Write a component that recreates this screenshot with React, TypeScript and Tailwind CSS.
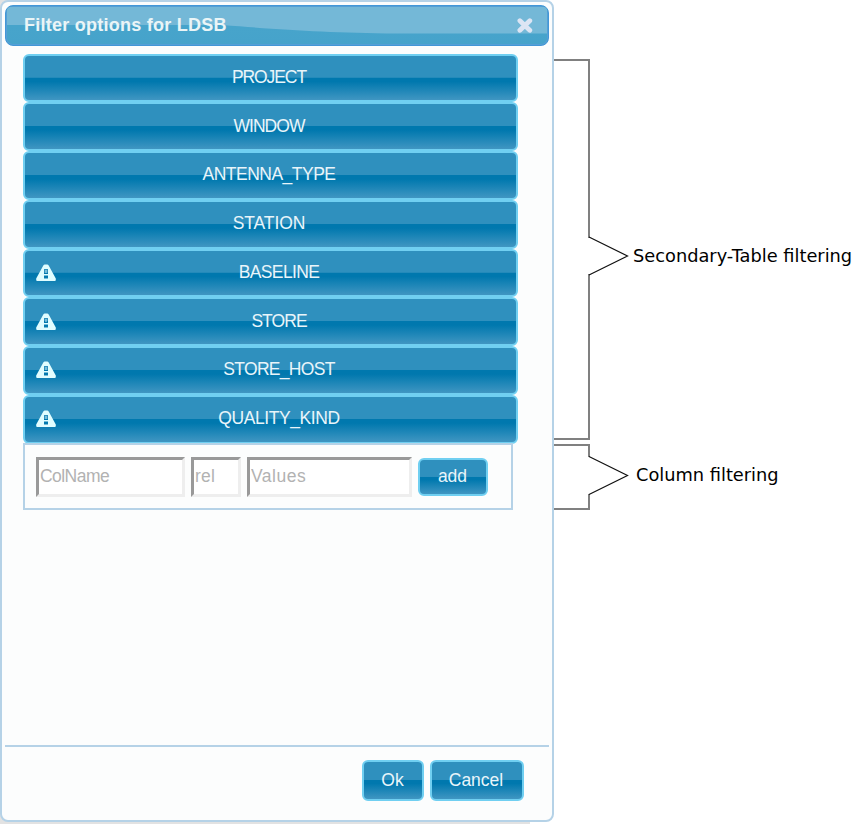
import React from 'react';

const glossy =
  'border-2 border-[#70cff1] bg-[linear-gradient(to_bottom,#2f90be_0%,#2f90be_48.5%,#0078ae_50%,#0078ae_58%,#4096c2_100%)] text-[#e9f5fa] font-["Liberation_Sans",Arial,sans-serif] text-[17.5px]';

const rows = [
  { label: 'PROJECT', warn: false, cls: 'tracking-[-1.1px]' },
  { label: 'WINDOW', warn: false, cls: 'tracking-[-0.95px]' },
  { label: 'ANTENNA_TYPE', warn: false, cls: 'tracking-[-0.5px]' },
  { label: 'STATION', warn: false, cls: 'tracking-[-0.1px]' },
  { label: 'BASELINE', warn: true, cls: 'tracking-[-0.65px]' },
  { label: 'STORE', warn: true, cls: 'tracking-[-0.95px]' },
  { label: 'STORE_HOST', warn: true, cls: 'tracking-[-0.7px]' },
  { label: 'QUALITY_KIND', warn: true, cls: 'tracking-[-0.4px]' },
];

function WarningIcon() {
  return (
    <svg width="20" height="18" viewBox="0 0 20 18" className="ml-[11px] shrink-0">
      <path
        fill="#e0fdff"
        fillRule="evenodd"
        d="M8.800 0.500h2.400q0.900 0 1.500 1L19.800 14.500v1.500q0 1-1 1H1.200Q0.200 17 0.200 16v-1.500L7.300 1.500q0.600-1 1.500-1zM8 5v5h4v-5zM8 11.500v3h4v-3z"
      />
      <path fill="#bfe9f2" d="M9.500 6h1v3h-1z" />
    </svg>
  );
}

function Field({ width, text, cls }: { width: string; text: string; cls: string }) {
  return (
    <input
      placeholder={text}
      className={`${width} ${cls} h-[40px] shrink-0 rounded-none border-[3px] border-t-[#999] border-l-[#999] border-r-[#eee] border-b-[#eee] bg-white px-[1px] font-["Liberation_Sans",Arial,sans-serif] text-[17.5px] outline-none placeholder:text-[#b2b2b2]`}
    />
  );
}

function Dialog() {
  return (
    <section className="flex h-[822px] w-[554px] shrink-0 flex-col rounded-[8px] border-2 border-[#b5d2e7] bg-[#fcfdfd] p-[3px] pb-px">
      <header className="relative flex h-[40.5px] shrink-0 items-center justify-between overflow-hidden rounded-[8px] border border-[#4297d7] bg-gradient-to-b from-[#48a5cb] to-[#46a3cb] pr-[15px] pl-[18px] shadow-[inset_0_0_0_1px_#559fd6]">
        <svg className="absolute inset-px" width="540" height="37" viewBox="0 0 540 37">
          <path fill="#74b8d7" d="M0 0H540V26.500H390C320 25.500 280 23 215 18H0z" />
        </svg>
        <h1 className='relative font-["Liberation_Sans",Arial,sans-serif] text-[18px] font-bold tracking-[0.25px] text-[#eaf5f7]'>
          Filter options for LDSB
        </h1>
        <svg className="relative" width="16" height="15" viewBox="0 0 16 15">
          <path d="M2.900 2.700l9.900 9.600M12.800 2.700l-9.900 9.600" stroke="#dce5f4" strokeWidth="4.800" strokeLinecap="round" />
        </svg>
      </header>
      <div className="mt-[8px] ml-[18px] w-[495px] shrink-0">
        {rows.map((r) => (
          <button key={r.label} className={`${glossy} ${r.cls} flex h-[48.75px] w-full items-center rounded-[6px]`}>
            {r.warn && <WarningIcon />}
            <span className={`flex-1 text-center ${r.warn ? 'pr-[14px]' : 'pr-[3px]'} pb-[2px]`}>{r.label}</span>
          </button>
        ))}
      </div>
      <div className="-mt-[0.5px] ml-[18px] flex h-[67px] w-[489.5px] shrink-0 items-center border-2 border-[#b5d2e7] pl-[11px]">
        <Field width="w-[149px]" text="ColName" cls="tracking-[-0.55px]" />
        <Field width="ml-[6px] w-[50px]" text="rel" cls="tracking-[0.2px]" />
        <Field width="ml-[6px] w-[165px]" text="Values" cls="tracking-[0.5px]" />
        <button className={`${glossy} ml-[6px] h-[38px] w-[70px] rounded-[6px] pr-px pb-px`}>add</button>
      </div>
      <footer className="mt-auto flex h-[74px] shrink-0 justify-end gap-[6px] border-t-2 border-[#b5d2e7] pt-[13px] pr-[25px]">
        <button className={`${glossy} h-[41px] w-[62px] rounded-[6px] pr-[1px] pb-px`}>Ok</button>
        <button className={`${glossy} h-[41px] w-[94px] rounded-[6px] pr-[2px] pb-px tracking-[0px]`}>Cancel</button>
      </footer>
    </section>
  );
}

function Bracket({ height, d, lines, label, labelCls }: { height: number; d: string; lines: string; label: string; labelCls: string }) {
  return (
    <div className="flex items-center">
      <svg width="75" height={height} viewBox={`0 0 75 ${height}`} fill="none" className="shrink-0">
        <path d={lines} stroke="#808080" strokeWidth="2" shapeRendering="crispEdges" />
        <path d={d} stroke="#111" strokeWidth="1.200" />
      </svg>
      <span className={`font-["DejaVu_Sans",sans-serif] whitespace-nowrap text-black ${labelCls}`}>{label}</span>
    </div>
  );
}

export default function App() {
  return (
    <main className="flex h-[824px] w-[859px] overflow-hidden bg-white">
      <div className="h-[824px] w-[554px] shrink-0 bg-[linear-gradient(to_right,#e2e2e2_530px,#fff_530px)]">
        <Dialog />
      </div>
      <aside className="flex flex-col pt-[59px]">
        <Bracket
          height={381}
          lines="M0 1H35V179M35 215V380H0"
          d="M35 178L73.500 197L35 216"
          label="Secondary-Table filtering"
          labelCls="ml-[4px] pt-[13px] text-[17.8px]"
        />
        <div className="mt-[4px]">
          <Bracket
            height={66}
            lines="M0 1H35V13M35 50V65H0"
            d="M35 12.500L73.500 31.500L35 50.500"
            label="Column filtering"
            labelCls="ml-[7px] pb-[3px] text-[17.8px]"
          />
        </div>
      </aside>
    </main>
  );
}
